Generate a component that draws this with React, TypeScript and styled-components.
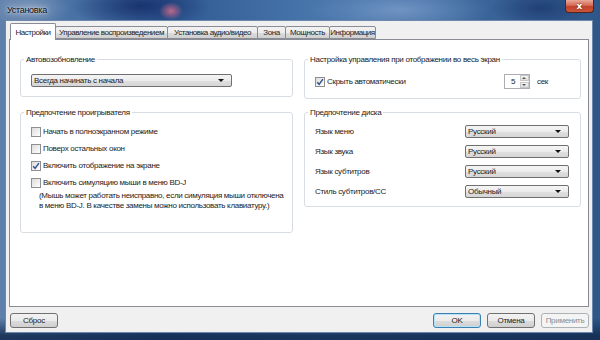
import React from 'react';
import styled, { createGlobalStyle } from 'styled-components';

const GlobalStyle = createGlobalStyle`
  html, body {
    margin: 0;
    padding: 0;
    background: #2a4f7c;
  }
  body {
    font-family: "Liberation Sans", Arial, sans-serif;
    font-size: 8px;
    letter-spacing: -0.3px;
    color: #1c1c1c;
  }
`;

const Window = styled.div`
  width: 600px;
  height: 340px;
  box-sizing: border-box;
  display: flex;
  flex-direction: column;
  padding: 0 7px 7px 5px;
  background:
    linear-gradient(to bottom, rgba(0, 0, 0, 0) 318px, rgba(18, 42, 78, 0.85) 336px),
    radial-gradient(ellipse 12px 9px at 171px 11px, rgba(215, 110, 140, 0.85), rgba(0, 0, 0, 0)),
    radial-gradient(ellipse 70px 22px at 140px 6px, rgba(16, 36, 96, 0.75), rgba(0, 0, 0, 0)),
    radial-gradient(ellipse 50px 20px at 540px 8px, rgba(20, 44, 100, 0.6), rgba(0, 0, 0, 0)),
    radial-gradient(ellipse 90px 24px at 400px 10px, rgba(150, 180, 222, 0.55), rgba(0, 0, 0, 0)),
    radial-gradient(ellipse 40px 20px at 30px 8px, rgba(150, 170, 200, 0.6), rgba(0, 0, 0, 0)),
    linear-gradient(to right, #5f80aa 0%, #4670a4 14%, #2f5892 28%, #4876ab 52%, #3c679c 78%, #2e5689 100%);
`;

const TitleBar = styled.div`
  height: 20px;
  display: flex;
  justify-content: space-between;
  align-items: flex-start;
`;

const Title = styled.span`
  padding: 5px 0 0 2px;
  font-size: 9px;
  color: #0a0a0a;
  text-shadow: 0 0 6px rgba(255, 255, 255, 0.9), 0 0 2px rgba(255, 255, 255, 0.8);
`;

const CloseButton = styled.div`
  width: 29px;
  height: 13px;
  margin-right: -1px;
  box-sizing: border-box;
  border: 1px solid #4d2620;
  border-top: none;
  border-radius: 0 0 4px 4px;
  display: flex;
  align-items: center;
  justify-content: center;
  background: linear-gradient(to bottom, #e9a899 0%, #d46a55 45%, #c2412a 55%, #c9563a 100%);
  color: #fff;
  font-family: "DejaVu Sans", sans-serif;
  font-weight: bold;
  font-size: 9px;
  letter-spacing: 0;
  line-height: 1;
  text-shadow: 0 0 2px #5a1a10;
`;

const Client = styled.div`
  flex: 1;
  display: flex;
  flex-direction: column;
  background: #f0f0f0;
  border: 1px solid #6d88ab;
  padding: 2px 3px 3px 3px;
  min-height: 0;
`;

const TabStrip = styled.div`
  display: flex;
  align-items: flex-end;
  height: 16px;
`;

const Tab = styled.div<{ $active?: boolean; $width: number }>`
  position: relative;
  box-sizing: border-box;
  width: ${({ $width }) => $width}px;
  height: ${({ $active }) => ($active ? '17px' : '13px')};
  margin-bottom: ${({ $active }) => ($active ? '-1px' : '0')};
  margin-left: -1px;
  display: flex;
  align-items: center;
  justify-content: center;
  letter-spacing: -0.45px;
  border: 1px solid #898c95;
  border-bottom: ${({ $active }) => ($active ? 'none' : '1px solid #898c95')};
  border-radius: 2px 2px 0 0;
  background: ${({ $active }) =>
    $active ? '#ffffff' : 'linear-gradient(to bottom, #f2f2f2 0%, #ebebeb 50%, #dddddd 51%, #cfcfcf 100%)'};
  z-index: ${({ $active }) => ($active ? 2 : 1)};
  white-space: nowrap;
  &:first-child {
    margin-left: 1px;
  }
`;

const Panel = styled.div`
  flex: 1;
  background: #ffffff;
  border: 1px solid #898c95;
  padding: 14px 9px 0 10px;
  display: grid;
  grid-template-columns: 273px 277px;
  column-gap: 11px;
  row-gap: 8px;
  align-content: start;
  align-items: start;
`;

const Group = styled.fieldset<{ $pad?: number }>`
  margin: 0;
  min-width: 0;
  border: 1px solid #d8dde3;
  border-radius: 3px;
  padding: 0 11px ${({ $pad }) => $pad ?? 9}px 10px;
`;

const Legend = styled.legend`
  margin-left: -7px;
  padding: 0 2px;
  line-height: 11px;
  color: #1a1a1a;
`;

const Select = styled.div<{ $width?: number }>`
  box-sizing: border-box;
  width: ${({ $width }) => ($width ? `${$width}px` : '100%')};
  height: 13px;
  display: flex;
  align-items: center;
  justify-content: space-between;
  padding: 0 7px 0 2px;
  border: 1px solid #707070;
  border-radius: 2px;
  background: linear-gradient(to bottom, #f4f4f4 0%, #ececec 50%, #e0e0e0 51%, #d6d6d6 100%);
  line-height: 11px;
`;

const Arrow = styled.span`
  width: 0;
  height: 0;
  border-left: 3px solid transparent;
  border-right: 3px solid transparent;
  border-top: 3px solid #111;
`;

const FirstSelect = styled.div`
  margin-top: 9px;
`;

const CheckList = styled.div`
  display: flex;
  flex-direction: column;
  gap: 6px;
  margin-top: 8px;
`;

const CheckRow = styled.label`
  display: flex;
  align-items: center;
  gap: 2px;
  height: 11px;
  line-height: 11px;
  white-space: nowrap;
`;

const Box = styled.span`
  box-sizing: border-box;
  width: 10px;
  height: 10px;
  border: 1px solid #8f8f8f;
  background: linear-gradient(135deg, #dcdcdc 0%, #f4f4f4 70%, #ffffff 100%);
  display: flex;
  align-items: center;
  justify-content: center;
  flex-shrink: 0;
`;

const Note = styled.p`
  margin: 3px 0 0 8px;
  line-height: 10px;
  white-space: nowrap;
  color: #1c1c1c;
`;

const SpinRow = styled.div`
  margin-top: 9px;
  display: flex;
  align-items: center;
  justify-content: space-between;
`;

const SpinWrap = styled.div`
  display: flex;
  align-items: center;
  gap: 7px;
  margin-right: 21px;
`;

const Spinner = styled.div`
  box-sizing: border-box;
  width: 26px;
  height: 15px;
  border: 1px solid #abadb3;
  display: flex;
  align-items: stretch;
  background: #fff;
`;

const SpinValue = styled.span`
  flex: 1;
  padding-left: 6px;
  line-height: 13px;
`;

const SpinButtons = styled.div`
  width: 9px;
  display: flex;
  flex-direction: column;
  gap: 1px;
`;

const SpinButton = styled.div<{ $up?: boolean }>`
  flex: 1;
  display: flex;
  align-items: center;
  justify-content: center;
  background: linear-gradient(to bottom, #f4f4f4, #dedede);
  border: 1px solid #c6c6c6;
  &::after {
    content: '';
    border-left: 2px solid transparent;
    border-right: 2px solid transparent;
    ${({ $up }) => ($up ? 'border-bottom: 2px solid #555;' : 'border-top: 2px solid #555;')}
  }
`;

const DiscRows = styled.div`
  display: flex;
  flex-direction: column;
  gap: 7px;
  margin-top: 7px;
`;

const DiscRow = styled.div`
  display: grid;
  grid-template-columns: 1fr 104px;
  align-items: center;
`;

const ButtonBar = styled.div`
  display: flex;
  align-items: center;
  gap: 6px;
  margin-top: 6px;
  padding: 0 0 1px 1px;
`;

const Spacer = styled.div`
  flex: 1;
`;

const Button = styled.div<{ $default?: boolean; $disabled?: boolean }>`
  box-sizing: border-box;
  width: 48px;
  height: 15px;
  display: flex;
  align-items: center;
  justify-content: center;
  border-radius: 3px;
  border: 1px solid ${({ $default, $disabled }) => ($default ? '#3c7fb1' : $disabled ? '#adb2b5' : '#707070')};
  background: ${({ $disabled }) =>
    $disabled ? '#f4f4f4' : 'linear-gradient(to bottom, #f2f2f2 0%, #ebebeb 50%, #dddddd 51%, #cfcfcf 100%)'};
  color: ${({ $disabled }) => ($disabled ? '#8d8d8d' : '#1c1c1c')};
  box-shadow: ${({ $default }) => ($default ? 'inset 0 0 0 1px #b4e2f6' : 'none')};
`;

const Check: React.FC<{ checked?: boolean }> = ({ checked }) => (
  <Box>
    {checked && (
      <svg width="8" height="8" viewBox="0 0 8 8">
        <path d="M1.2 4.2 L3.1 6.3 L6.9 1.2" fill="none" stroke="#2b4f8c" strokeWidth="1.4" />
      </svg>
    )}
  </Box>
);

const discRows = [
  ['Язык меню', 'Русский'],
  ['Язык звука', 'Русский'],
  ['Язык субтитров', 'Русский'],
  ['Стиль субтитров/CC', 'Обычный'],
];

const tabs: [string, number][] = [
  ['Настройки', 46],
  ['Управление воспроизведением', 113],
  ['Установка аудио/видео', 91],
  ['Зона', 29],
  ['Мощность', 45],
  ['Информация', 47],
];

const App: React.FC = () => {
  return (
    <>
      <GlobalStyle />
      <Window>
        <TitleBar>
          <Title>Установка</Title>
          <CloseButton>x</CloseButton>
        </TitleBar>
        <Client>
          <TabStrip>
            {tabs.map(([t, w], i) => (
              <Tab key={t} $active={i === 0} $width={w}>
                {t}
              </Tab>
            ))}
          </TabStrip>
          <Panel>
            <Group>
              <Legend>Автовозобновление</Legend>
              <FirstSelect>
                <Select $width={201}>
                  <span>Всегда начинать с начала</span>
                  <Arrow />
                </Select>
              </FirstSelect>
            </Group>
            <Group>
              <Legend>Настройка управления при отображении во весь экран</Legend>
              <SpinRow>
                <CheckRow>
                  <Check checked />
                  Скрыть автоматически
                </CheckRow>
                <SpinWrap>
                  <Spinner>
                    <SpinValue>5</SpinValue>
                    <SpinButtons>
                      <SpinButton $up />
                      <SpinButton />
                    </SpinButtons>
                  </Spinner>
                  <span>сек</span>
                </SpinWrap>
              </SpinRow>
            </Group>
            <Group $pad={21}>
              <Legend>Предпочтение проигрывателя</Legend>
              <CheckList>
                <CheckRow>
                  <Check />
                  Начать в полноэкранном режиме
                </CheckRow>
                <CheckRow>
                  <Check />
                  Поверх остальных окон
                </CheckRow>
                <CheckRow>
                  <Check checked />
                  Включить отображение на экране
                </CheckRow>
                <CheckRow>
                  <Check />
                  Включить симуляцию мыши в меню BD-J
                </CheckRow>
              </CheckList>
              <Note>
                (Мышь может работать неисправно, если симуляция мыши отключена
                <br />
                в меню BD-J. В качестве замены можно использовать клавиатуру.)
              </Note>
            </Group>
            <Group $pad={8}>
              <Legend>Предпочтение диска</Legend>
              <DiscRows>
                {discRows.map(([label, value]) => (
                  <DiscRow key={label}>
                    <span>{label}</span>
                    <Select>
                      <span>{value}</span>
                      <Arrow />
                    </Select>
                  </DiscRow>
                ))}
              </DiscRows>
            </Group>
          </Panel>
          <ButtonBar>
            <Button>Сброс</Button>
            <Spacer />
            <Button $default>OK</Button>
            <Button>Отмена</Button>
            <Button $disabled>Применить</Button>
          </ButtonBar>
        </Client>
      </Window>
    </>
  );
};

export default App;
